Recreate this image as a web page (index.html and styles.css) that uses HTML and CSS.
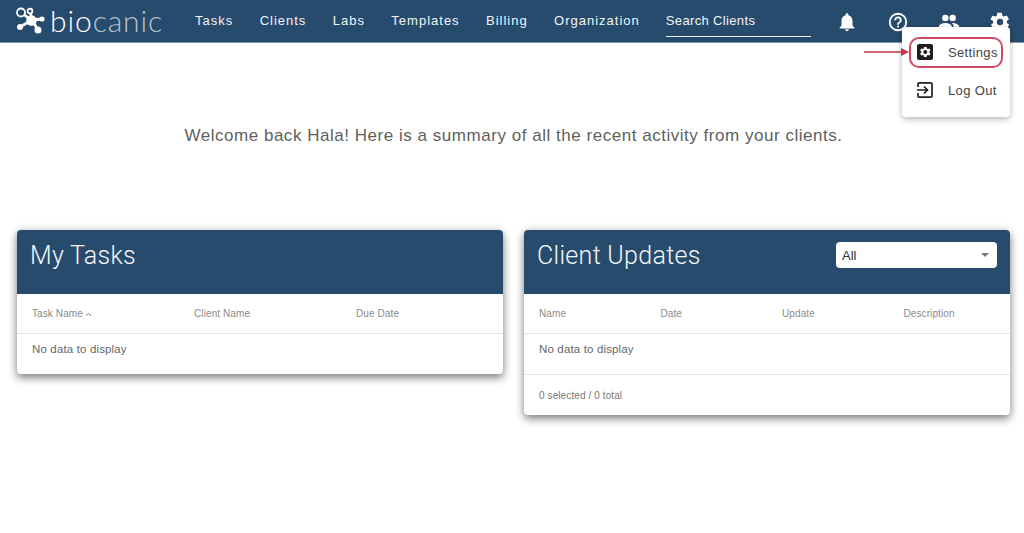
FILE: index.html
```html
<!DOCTYPE html>
<html lang="en">
<head>
<meta charset="utf-8">
<title>Biocanic</title>
<link rel="stylesheet" href="styles.css">
</head>
<body>
<header class="topbar">
  <div class="logo">
    <svg class="logo-mark" width="32" height="28" viewBox="0 0 32 28">
      <g stroke="#fff" stroke-width="2.800">
        <path d="M6 5l11 9M15 4l2 9M17 13l10-1M17 13l-12 7M17 13l6 10"/>
      </g>
      <g fill="#274b6d" stroke="#fff" stroke-width="1.800">
        <circle cx="6" cy="5.500" r="4"/>
        <circle cx="15" cy="4" r="2.400"/>
      </g>
      <g fill="#fff">
        <circle cx="16.500" cy="13.500" r="5.200"/>
        <circle cx="27" cy="12" r="2.600"/>
        <circle cx="5" cy="20" r="3"/>
        <circle cx="23" cy="23" r="3.500"/>
      </g>
    </svg>
    <span class="logo-text"><span class="logo-bio">bio</span><span class="logo-canic">canic</span></span>
  </div>
  <nav class="nav">
    <a class="nav-item">Tasks</a>
    <a class="nav-item">Clients</a>
    <a class="nav-item">Labs</a>
    <a class="nav-item">Templates</a>
    <a class="nav-item">Billing</a>
    <a class="nav-item">Organization</a>
  </nav>
  <div class="search">Search Clients</div>
  <div class="icons">
    <svg class="icon" width="22" height="22" viewBox="0 0 24 24"><path fill="#fff" d="M12 22a2 2 0 0 0 2-2h-4a2 2 0 0 0 2 2zm6-6v-5c0-3.100-1.600-5.600-4.500-6.300V4a1.500 1.500 0 0 0-3 0v.7C7.600 5.400 6 7.900 6 11v5l-2 2v1h16v-1z"/></svg>
    <svg class="icon" width="22" height="22" viewBox="0 0 24 24"><path fill="#fff" d="M11 18h2v-2h-2zm1-16a10 10 0 1 0 0 20 10 10 0 0 0 0-20zm0 18a8 8 0 1 1 0-16 8 8 0 0 1 0 16zm0-14a4 4 0 0 0-4 4h2a2 2 0 1 1 4 0c0 2-3 1.750-3 5h2c0-2.250 3-2.500 3-5a4 4 0 0 0-4-4z"/></svg>
    <svg class="icon" width="22" height="22" viewBox="0 0 24 24"><path fill="#fff" d="M8 11a3.500 3.500 0 1 0 0-7 3.500 3.500 0 0 0 0 7zm8 0a3.500 3.500 0 1 0 0-7 3.500 3.500 0 0 0 0 7zM8 13c-2.700 0-7 1.300-7 4v2h14v-2c0-2.700-4.300-4-7-4zm8 0c-.3 0-.7 0-1.100.1 1.300.9 2.100 2.200 2.100 3.900v2h6v-2c0-2.700-4.300-4-7-4z"/></svg>
    <svg class="icon" width="22" height="22" viewBox="0 0 24 24"><path fill="#fff" d="M19.400 13c.1-.3.100-.7.100-1s0-.7-.1-1l2.100-1.600c.2-.2.200-.4.100-.6l-2-3.500c-.1-.2-.4-.3-.6-.2l-2.500 1c-.5-.4-1.100-.7-1.700-1L14 2.400c0-.2-.2-.4-.5-.4h-4c-.2 0-.4.200-.5.400l-.4 2.700c-.6.200-1.100.6-1.700 1l-2.500-1c-.2-.1-.5 0-.6.200l-2 3.500c-.1.200-.1.500.1.600L4.600 11c0 .3-.1.700-.1 1s0 .7.100 1l-2.100 1.600c-.2.200-.2.400-.1.600l2 3.500c.1.200.4.300.6.200l2.500-1c.5.400 1.100.7 1.700 1l.4 2.700c0 .2.200.4.500.4h4c.2 0 .4-.2.500-.4l.4-2.700c.6-.2 1.100-.6 1.700-1l2.500 1c.2.100.5 0 .6-.2l2-3.500c.1-.2.100-.5-.1-.6zM12 15.500a3.500 3.500 0 1 1 0-7 3.500 3.500 0 0 1 0 7z"/></svg>
  </div>
</header>

<main class="page">
  <p class="welcome">Welcome back Hala! Here is a summary of all the recent activity from your clients.</p>
  <div class="cards">
    <section class="card">
      <div class="card-head"><h2 class="card-title">My Tasks</h2></div>
      <div class="thead cols-3">
        <span>Task Name<svg class="sort" width="7" height="5" viewBox="0 0 7 5"><path d="M1 3.500l2.500-2 2.500 2" fill="none" stroke="#777" stroke-width="1"/></svg></span>
        <span>Client Name</span>
        <span>Due Date</span>
      </div>
      <div class="empty">No data to display</div>
    </section>
    <section class="card">
      <div class="card-head">
        <h2 class="card-title">Client Updates</h2>
        <div class="select"><span>All</span><i class="caret"></i></div>
      </div>
      <div class="thead cols-4">
        <span>Name</span>
        <span>Date</span>
        <span>Update</span>
        <span>Description</span>
      </div>
      <div class="empty">No data to display</div>
      <div class="foot">0 selected / 0 total</div>
    </section>
  </div>
</main>

<div class="menu">
  <div class="menu-item">
    <svg width="18" height="18" viewBox="0 0 18 18"><rect x="1" y="1" width="16" height="16" rx="2" fill="#1f1f1f"/><path fill="#fff" d="M13.300 9.600c0-.2.100-.4.100-.6s0-.4-.1-.6l1.200-1-1.200-2-1.500.6c-.3-.2-.6-.4-1-.5L10.500 4h-2.400l-.3 1.500c-.4.100-.7.300-1 .5l-1.500-.6-1.200 2 1.300 1c0 .2-.1.400-.1.600s0 .4.100.6l-1.300 1 1.200 2 1.500-.6c.3.200.6.400 1 .5l.3 1.500h2.400l.3-1.500c.4-.1.700-.3 1-.5l1.500.6 1.200-2zM9.300 11a2 2 0 1 1 0-4 2 2 0 0 1 0 4z"/></svg>
    <span>Settings</span>
  </div>
  <div class="menu-item">
    <svg width="18" height="18" viewBox="0 0 18 18"><path fill="none" stroke="#1f1f1f" stroke-width="1.700" d="M2 6V3a1.200 1.200 0 0 1 1.200-1.200h11.600A1.200 1.200 0 0 1 16 3v12a1.200 1.200 0 0 1-1.200 1.200H3.200A1.200 1.200 0 0 1 2 15v-3M1 9h10M8 5.500L11.500 9 8 12.500"/></svg>
    <span>Log Out</span>
  </div>
</div>
<div class="callout"></div>
<svg class="arrow" width="46" height="10" viewBox="0 0 46 10"><path d="M0 5h38" stroke="#c8324f" stroke-width="1.300"/><path d="M37 1l8 4-8 4z" fill="#c8324f"/></svg>
</body>
</html>
```
FILE: styles.css
```css
* { box-sizing: border-box; }
html, body { margin: 0; height: 100%; }
body {
  background: #fff;
  font-family: "Liberation Sans", Arial, sans-serif;
  color: #555;
  overflow: hidden;
  position: relative;
}
.topbar {
  height: 43px;
  background: #274b6d;
  border-bottom: 1px solid #7f97ad;
  display: flex;
  align-items: center;
  padding-left: 15px;
  color: #fff;
}
.logo { display: flex; align-items: center; width: 180px; flex: none; }
.logo-mark { flex: none; display: block; }
.logo-text {
  font-family: Lato, "Liberation Sans", sans-serif;
  font-weight: 300;
  font-size: 30px;
  line-height: 1;
  letter-spacing: .9px;
  margin-left: 3px;
  margin-top: -2px;
}
.logo-bio { color: #fff; }
.logo-canic { color: #b4c1cd; }
.nav { display: flex; gap: 26.400px; margin-top: -2px; }
.nav-item {
  font-size: 13px;
  letter-spacing: 1px;
  color: #f2f4f7;
}
.search {
  margin-left: 26px;
  width: 145px;
  height: 30px;
  padding-top: 6px;
  border-bottom: 1px solid #e6ebf0;
  font-size: 13px;
  letter-spacing: .35px;
  color: #f2f4f7;
  margin-top: 1px;
}
.icons { display: flex; margin-left: 25px; margin-top: 1px; gap: 29px; }
.icon { display: block; }
.page { padding: 0 14px 0 17px; }
.welcome {
  margin: 0;
  padding-top: 81px;
  height: 187px;
  text-align: center;
  font-size: 17px;
  line-height: 24px;
  letter-spacing: .53px;
  color: #5f5f5f;
}
.cards {
  display: grid;
  grid-template-columns: 486px 486px;
  gap: 21px;
  align-items: start;
}
.card {
  background: #fff;
  border-radius: 4px;
  box-shadow: 0 4px 8px rgba(0,0,0,.45), 0 0 10px rgba(0,0,0,.12);
}
.card-head {
  height: 64px;
  background: #274b6d;
  border-radius: 4px 4px 0 0;
  display: flex;
  justify-content: space-between;
  align-items: flex-start;
  padding: 12px 13px 0;
}
.card-title {
  margin: 1px 0 0;
  font-family: Roboto, sans-serif;
  font-weight: 300;
  font-size: 25px;
  line-height: 25px;
  letter-spacing: .3px;
  color: #f4f6f8;
}
.select {
  width: 161px;
  height: 26px;
  background: #fff;
  border-radius: 4px;
  display: flex;
  align-items: center;
  justify-content: space-between;
  padding: 0 8px 0 6px;
  font-size: 13px;
  color: #333;
}
.caret {
  border: 4px solid transparent;
  border-top: 4px solid #777;
  border-bottom: 0;
}
.thead {
  display: grid;
  height: 40px;
  align-items: center;
  padding: 0 15px 1px;
  border-bottom: 1px solid #e4e4e4;
  font-size: 10px;
  letter-spacing: .1px;
  color: #8a8a8a;
}
.cols-3 { grid-template-columns: 162px 162px 1fr; }
.cols-4 { grid-template-columns: 121.500px 121.500px 121.500px 1fr; }
.sort { margin-left: 2px; }
.empty {
  height: 40px;
  padding: 8px 15px 0;
  font-size: 11.500px;
  line-height: 14px;
  letter-spacing: .15px;
  color: #666;
}
.foot {
  height: 41px;
  border-top: 1px solid #e4e4e4;
  padding: 14px 15px 0;
  font-size: 10px;
  line-height: 13px;
  letter-spacing: .1px;
  color: #777;
}
.menu {
  position: absolute;
  left: 902px;
  top: 27px;
  width: 108px;
  height: 90px;
  background: #fff;
  border-radius: 4px;
  box-shadow: 0 2px 6px rgba(0,0,0,.3);
  padding-top: 6px;
}
.menu-item {
  display: flex;
  align-items: center;
  height: 38px;
  padding-left: 14px;
  gap: 14px;
  font-size: 13px;
  letter-spacing: .35px;
  color: #444;
}
.callout {
  position: absolute;
  left: 909px;
  top: 37px;
  width: 94px;
  height: 31px;
  border: 2px solid #cf4a62;
  border-radius: 10px;
}
.arrow { position: absolute; left: 864px; top: 47px; }
```
